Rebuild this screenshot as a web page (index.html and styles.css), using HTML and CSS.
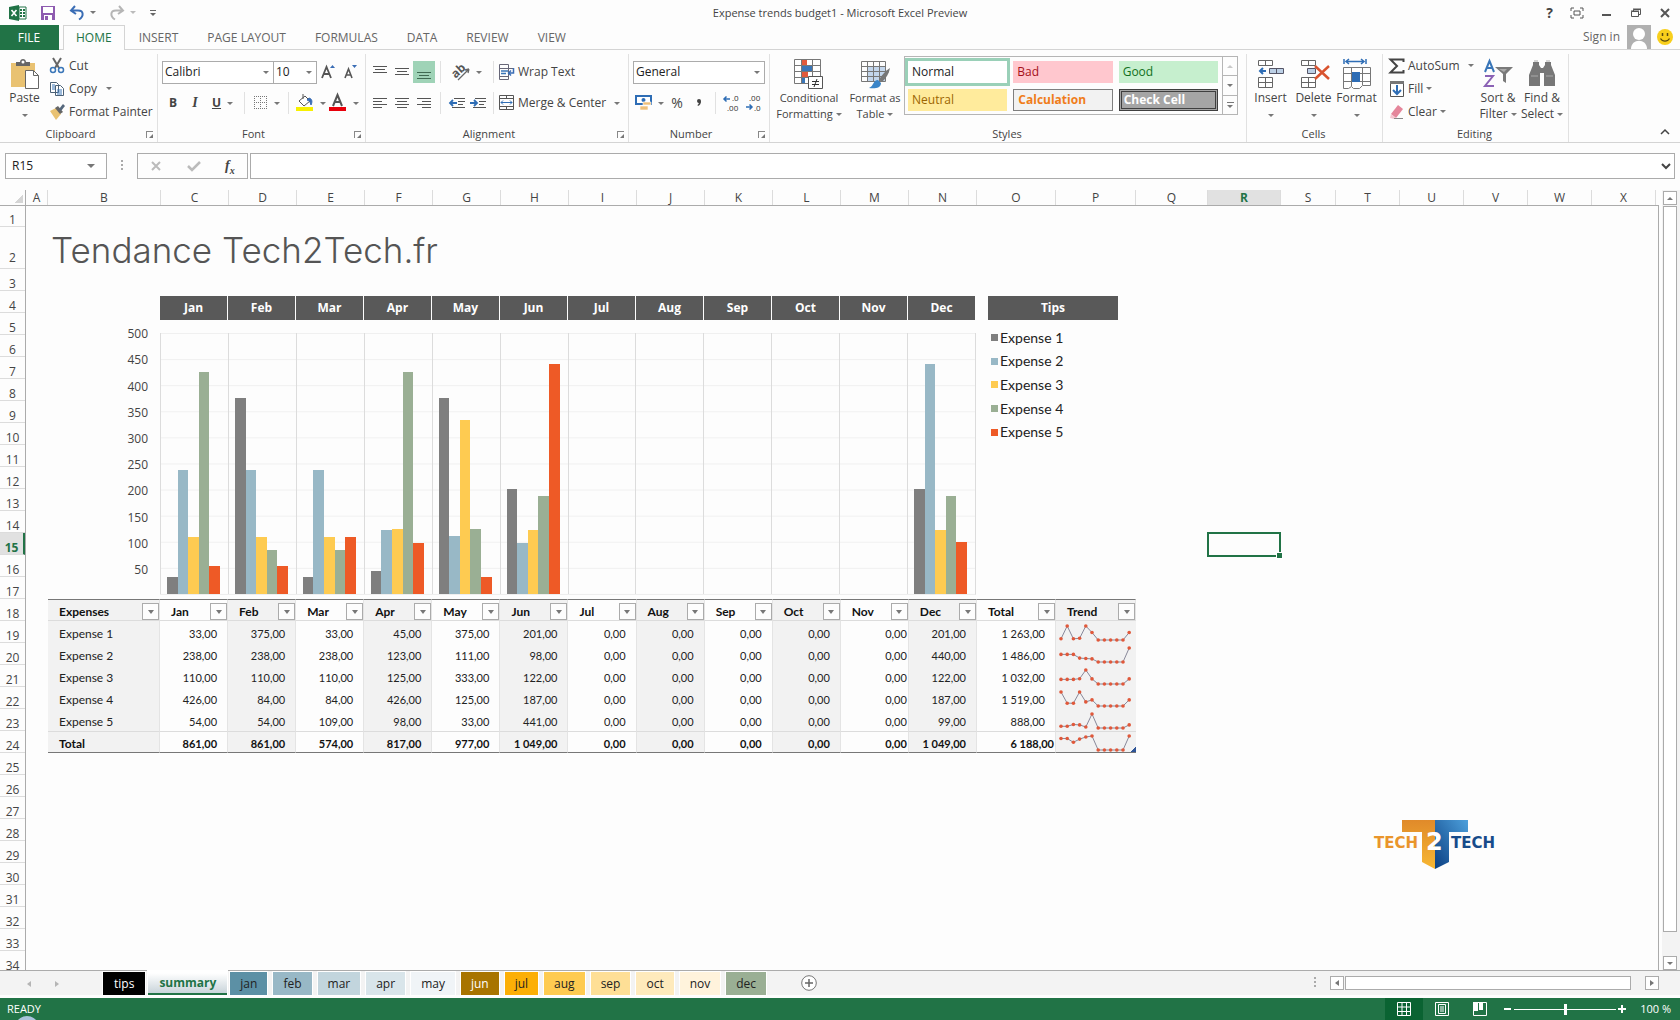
FILE: index.html
```html
<!DOCTYPE html>
<html lang="en">
<head>
    <meta charset="UTF-8">
    <title>Expense trends budget1 - Microsoft Excel Preview</title>
    <link rel="stylesheet" href="styles.css">
</head>
<body>
<header class="titlebar">
    <div class="quick">
        <svg class="logo-x" width="18" height="16" viewBox="0 0 18 16"><path d="M10 2h7v12h-7z" fill="#fff" stroke="#217346"/><path d="M11 5h2M11 8h2M11 11h2M14 5h2M14 8h2M14 11h2" stroke="#217346" stroke-width="2"/><path d="M0 2l10-2v16L0 14z" fill="#217346"/><path d="M2.500 5l5 6M7.500 5l-5 6" stroke="#fff" stroke-width="1.600"/></svg>
        <button aria-label="Save"><svg width="16" height="16" viewBox="0 0 16 16"><path d="M1 1h14v14H1z" fill="#8e5bb0"/><path d="M3 2h10v6H3zM4 10h8v5H4z" fill="#fff"/><path d="M5 11h3v4H5z" fill="#8e5bb0"/></svg></button>
        <button class="drop" aria-label="Undo"><svg width="16" height="16" viewBox="0 0 16 16"><path d="M6 1L2 5.500l5 3.500M2.500 5.500H9c6 0 6 6 1 9" fill="none" stroke="#3a6db5" stroke-width="2"/></svg></button>
        <button class="drop pale" aria-label="Redo"><svg width="16" height="16" viewBox="0 0 16 16"><path d="M10 1l4 4.500L9 9M13.500 5.500H7c-6 0-6 6-1 9" fill="none" stroke="#b5b5b5" stroke-width="2"/></svg></button>
        <button aria-label="Customize Quick Access Toolbar"><svg width="8" height="8" viewBox="0 0 8 8"><path d="M1 1.500h6" stroke="#666"/><path d="M1 4h6L4 7z" fill="#666"/></svg></button>
    </div>
    <h2>Expense trends budget1 - Microsoft Excel Preview</h2>
    <div class="window">
        <button class="help" aria-label="Help">?</button>
        <button aria-label="Ribbon display options"><svg width="14" height="12" viewBox="0 0 14 12"><path d="M1 4V1h3M10 1h3v3M13 8v3h-3M4 11H1V8M4 4h6v4H4z" fill="none" stroke="#555"/></svg></button>
        <button aria-label="Minimize"><svg width="12" height="12" viewBox="0 0 12 12"><path d="M1 8h9" stroke="#555" stroke-width="2"/></svg></button>
        <button aria-label="Restore"><svg width="12" height="12" viewBox="0 0 12 12"><path d="M1.500 4.500h7v5h-7zM3.500 4V2.500h7v5H9" fill="none" stroke="#555"/><path d="M1 4h8M3 2h8" stroke="#555"/></svg></button>
        <button aria-label="Close"><svg width="12" height="12" viewBox="0 0 12 12"><path d="M2 2l8 8M10 2l-8 8" stroke="#555" stroke-width="2"/></svg></button>
    </div>
</header>

<nav class="tabs">
    <a href="#" class="file">FILE</a>
    <a href="#" class="on">HOME</a>
    <a href="#">INSERT</a>
    <a href="#">PAGE LAYOUT</a>
    <a href="#">FORMULAS</a>
    <a href="#">DATA</a>
    <a href="#">REVIEW</a>
    <a href="#">VIEW</a>
    <div class="account">
        <a href="#">Sign in</a>
        <svg width="24" height="24" viewBox="0 0 24 24"><path d="M0 0h24v24H0z" fill="#b0b0b0"/><circle cx="12" cy="9" r="6" fill="#fff"/><path d="M4 24c0-11 16-11 16 0z" fill="#fff"/></svg>
        <svg width="16" height="16" viewBox="0 0 16 16"><circle cx="8" cy="8" r="8" fill="#f8cf1c"/><path d="M5.500 4v3M10.500 4v3" stroke="#5a4a10" stroke-width="1.500"/><path d="M3.500 9.500c2 3.500 7 3.500 9 0" fill="none" stroke="#5a4a10" stroke-width="1.200"/></svg>
    </div>
</nav>

<section class="ribbon">
    <div class="group clipboard">
        <div class="tools">
            <button class="big"><svg width="30" height="30" viewBox="0 0 30 30"><path d="M1 4h24v24H1z" fill="#e9c272"/><path d="M6 3h4c0-4 6-4 6 0h4v4H6z" fill="#666"/><circle cx="13" cy="3" r="1.500" fill="#fff"/><path d="M15.500 11.500h8l5 5v13h-13z" fill="#fff" stroke="#666"/><path d="M23.500 11.500v5h5" fill="none" stroke="#666"/></svg>Paste<i></i></button>
            <div class="stack">
                <button><svg width="16" height="16" viewBox="0 0 16 16"><path d="M4 0l6 10M12 0L6 10" stroke="#666" stroke-width="2"/><circle cx="4" cy="12" r="2.500" fill="none" stroke="#3a76b8" stroke-width="1.500"/><circle cx="12" cy="12" r="2.500" fill="none" stroke="#3a76b8" stroke-width="1.500"/></svg>Cut</button>
                <button><svg width="16" height="16" viewBox="0 0 16 16"><path d="M1.500 1.500h6l2 2v8h-8zM6.500 4.500h5l3 3v7h-8z" fill="#fff" stroke="#4b6176"/><path d="M3 4h3M3 6h3M3 8h3M8 9h5M8 11h5M8 13h5" stroke="#3a76b8"/></svg>Copy<i class="far"></i></button>
                <button><svg width="16" height="16" viewBox="0 0 16 16"><path d="M1 7l6-3 5 6-5 6z" fill="#e9c272"/><path d="M6 4l3-2 5 6-3 2z" fill="#666"/><path d="M10 5l4-5 2 2-4 5z" fill="#54677c"/></svg>Format Painter</button>
            </div>
        </div>
        <footer>Clipboard<b class="launch"></b></footer>
    </div>

    <div class="group font">
        <div class="tools lines">
            <div class="row">
                <label class="combo face"><select aria-label="Font"><option>Calibri</option></select></label>
                <label class="combo size"><select aria-label="Font size"><option>10</option></select></label>
                <button class="sq grow" aria-label="Increase font size"><svg width="16" height="16" viewBox="0 0 16 16"><path d="M2 14L6.500 3 11 14M4 10h5" fill="none" stroke="#555" stroke-width="1.800"/><path d="M10 4h5l-2.500-3z" fill="#3a6db5"/></svg></button>
                <button class="sq" aria-label="Decrease font size"><svg width="16" height="16" viewBox="0 0 16 16"><path d="M3 14l3.500-9L10 14M4 11h5" fill="none" stroke="#555" stroke-width="1.600"/><path d="M10 1h5l-2.500 3z" fill="#3a6db5"/></svg></button>
            </div>
            <div class="row">
                <button class="sq"><strong>B</strong></button>
                <button class="sq"><em>I</em></button>
                <button class="sq dropped"><u>U</u><i></i></button>
                <hr>
                <button class="sq dropped" aria-label="Borders"><svg width="14" height="14" viewBox="0 0 14 14"><path d="M0.500 0v13M6.500 0v13M12.500 0v13M0 .5h13M0 6.500h13M0 12.500h13" stroke="#777" stroke-dasharray="1 1"/></svg><i></i></button>
                <hr>
                <button class="sq dropped" aria-label="Fill colour"><svg width="18" height="18" viewBox="0 0 18 18"><path d="M3 7l6-5 5 5-6 5z" fill="#fff" stroke="#555"/><path d="M7 0v5" stroke="#555"/><path d="M13 4c4 1 3 5 2 7-1-3-1-4-4-5z" fill="#3a6db5" stroke="#3a6db5"/><path d="M0 13h17v4H0z" fill="#f7f000"/></svg><i></i></button>
                <button class="sq dropped" aria-label="Font colour"><svg width="18" height="18" viewBox="0 0 18 18"><path d="M4 12L8.500 1 13 12M6 8h5" fill="none" stroke="#555" stroke-width="2"/><path d="M0 13h17v4H0z" fill="#e8000b"/></svg><i></i></button>
            </div>
        </div>
        <footer>Font<b class="launch"></b></footer>
    </div>

    <div class="group align">
        <div class="tools lines">
            <div class="row">
                <button class="sq" aria-label="Top align"><svg width="14" height="14" viewBox="0 0 14 14"><path d="M0 1.500h14M2 4.500h10M0 7.500h14" stroke="#555"/></svg></button>
                <button class="sq" aria-label="Middle align"><svg width="14" height="14" viewBox="0 0 14 14"><path d="M0 3.500h14M2 6.500h10M0 9.500h14" stroke="#555"/></svg></button>
                <button class="sq active" aria-label="Bottom align"><svg width="14" height="14" viewBox="0 0 14 14"><path d="M0 7.500h14M2 10.500h10M0 13.500h14" stroke="#3f6b52"/></svg></button>
                <hr>
                <button class="sq turn" aria-label="Orientation"><svg width="18" height="18" viewBox="0 0 18 18"><path d="M6 17L17 6M17 6l-4 1M17 6l-1 4" fill="none" stroke="#666" stroke-width="1.300"/><text x="-1" y="12" transform="rotate(-42 6 8)" font-size="12" font-weight="700" fill="#555">ab</text></svg><i></i></button>
                <hr>
                <button class="text"><svg width="16" height="16" viewBox="0 0 16 16"><path d="M.5.5h9v15h-9zM0 4.500h14M0 12.500h10" fill="none" stroke="#667"/><path d="M2 7h7M2 9.500h5" stroke="#3a76b8" stroke-width="1.500"/><path d="M14.500 4v5H10M12 6.500L9.500 9l2.500 2.500" fill="none" stroke="#3a6db5" stroke-width="1.500"/></svg>Wrap Text</button>
            </div>
            <div class="row">
                <button class="sq" aria-label="Align left"><svg width="14" height="12" viewBox="0 0 14 12"><path d="M0 1.500h14M0 4.500h9M0 7.500h14M0 10.500h9" stroke="#555"/></svg></button>
                <button class="sq" aria-label="Center"><svg width="14" height="12" viewBox="0 0 14 12"><path d="M0 1.500h14M2 4.500h10M0 7.500h14M2 10.500h10" stroke="#555"/></svg></button>
                <button class="sq" aria-label="Align right"><svg width="14" height="12" viewBox="0 0 14 12"><path d="M0 1.500h14M5 4.500h9M0 7.500h14M5 10.500h9" stroke="#555"/></svg></button>
                <hr>
                <button class="sq" aria-label="Decrease indent"><svg width="16" height="12" viewBox="0 0 16 12"><path d="M5 1.500h11M9 4.500h7M9 7.500h5M3 10.500h13" stroke="#555"/><path d="M8 6H1M4 3L1 6l3 3" fill="none" stroke="#2e6db5" stroke-width="1.800"/></svg></button>
                <button class="sq" aria-label="Increase indent"><svg width="16" height="12" viewBox="0 0 16 12"><path d="M5 1.500h11M9 4.500h7M9 7.500h5M3 10.500h13" stroke="#555"/><path d="M0 6h7M4 3l3 3-3 3" fill="none" stroke="#2e6db5" stroke-width="1.800"/></svg></button>
                <hr>
                <button class="text"><svg width="16" height="16" viewBox="0 0 16 16"><path d="M.5.5h14v14H.5zM0 3.500h15M0 11.500h15M7.500 0v3M7.500 12v3" fill="none" stroke="#555"/><path d="M2 7.500h11M4 5.500l-2 2 2 2M11 5.500l2 2-2 2" fill="none" stroke="#2e6db5"/></svg>Merge &amp; Center<i class="far"></i></button>
            </div>
        </div>
        <footer>Alignment<b class="launch"></b></footer>
    </div>

    <div class="group number">
        <div class="tools lines">
            <div class="row">
                <label class="combo format"><select aria-label="Number format"><option>General</option></select></label>
            </div>
            <div class="row">
                <button class="sq dropped" aria-label="Accounting format"><svg width="17" height="16" viewBox="0 0 17 16"><path d="M1 1h15v8H1z" fill="#fff" stroke="#2e6db5" stroke-width="2"/><circle cx="8.500" cy="5" r="2" fill="#2e6db5"/><path d="M8 7h8v3H8zM5 11h8v4H5z" fill="#efc07a" stroke="#fff" stroke-width=".6"/></svg><i></i></button>
                <button class="sq percent">%</button>
                <button class="sq comma" aria-label="Comma style"><svg width="6" height="10" viewBox="0 0 6 10"><circle cx="3" cy="3" r="2" fill="#444"/><path d="M5 3q0 4-3 5l-.5-1q2-1 1-3z" fill="#444"/></svg></button>
                <hr>
                <button class="sq" aria-label="Increase decimal"><svg width="18" height="20" viewBox="0 0 18 20"><path d="M7 6H1M3.500 3.500L1 6l2.500 2.500" fill="none" stroke="#2e6db5" stroke-width="1.500"/><text x="9" y="8" font-size="8" fill="#333">.0</text><text x="4" y="18" font-size="8" fill="#333">.00</text></svg></button>
                <button class="sq" aria-label="Decrease decimal"><svg width="18" height="20" viewBox="0 0 18 20"><path d="M1 14h6M4.500 11.500L7 14l-2.500 2.500" fill="none" stroke="#2e6db5" stroke-width="1.500"/><text x="4" y="8" font-size="8" fill="#333">.00</text><text x="9" y="18" font-size="8" fill="#333">.0</text></svg></button>
            </div>
        </div>
        <footer>Number<b class="launch"></b></footer>
    </div>

    <div class="group styles">
        <div class="tools">
            <button class="big wide"><svg width="30" height="30" viewBox="0 0 30 30"><path d="M.5.5h26v24H.5z" fill="#fff"/><path d="M7 0h6v6H7zM7 12h7v6H7z" fill="#e25a3c"/><path d="M8 7h10v5H8z" fill="#3a76b8"/><path d="M7 19h4v5H7z" fill="#3a76b8"/><path d="M.5.5h26v24H.5zM7.500 0v24M18.500 0v24M0 6.500h27M0 12.500h27M0 18.500h27" fill="none" stroke="#777"/><path d="M14.500 17.500h14v12h-14z" fill="#fff" stroke="#555"/><path d="M18 22.500h7M18 25.500h7M23 20l-3 8" stroke="#333"/></svg>Conditional<span>Formatting<i></i></span></button>
            <button class="big"><svg width="30" height="30" viewBox="0 0 30 30"><path d="M8 7h18v15H8z" fill="#c3d6ec"/><path d="M1.500 2.500h24v20h-24zM1 7.500h25M1 12.500h25M1 17.500h25M7.500 2v20M13.500 2v20M19.500 2v20" fill="none" stroke="#777"/><path d="M30 9c-5 3-9 8-11 12l3 2c4-4 7-8 8-14z" fill="#777"/><path d="M18 21c-5 0-4 6-9 8 6 1 12 0 12-5z" fill="#3a85c8"/></svg>Format as<span>Table<i></i></span></button>
            <div class="gallery">
                <ul>
                    <li><button class="normal">Normal</button></li>
                    <li><button class="bad">Bad</button></li>
                    <li><button class="good">Good</button></li>
                    <li><button class="neutral">Neutral</button></li>
                    <li><button class="calc">Calculation</button></li>
                    <li><button class="check">Check Cell</button></li>
                </ul>
                <div class="spin">
                    <button aria-label="Previous styles"><i class="up"></i></button>
                    <button aria-label="Next styles"><i></i></button>
                    <button class="more" aria-label="More styles"><i></i></button>
                </div>
            </div>
        </div>
        <footer class="plain">Styles</footer>
    </div>

    <div class="group cells">
        <div class="tools">
            <button class="big"><svg width="30" height="30" viewBox="0 0 30 30"><path d="M2.500 1.500h14v5h-14zM9.500 1v5M2.500 18.500h14v10h-14zM9.500 18v10M2 23.500h14" fill="#fff" stroke="#666"/><path d="M13.500 9.500h14v5h-14zM20.500 9v5" fill="#bcd0e6" stroke="#556"/><path d="M10 12H4M7 9l-3 3 3 3" fill="none" stroke="#2e6db5" stroke-width="2"/></svg>Insert<i></i></button>
            <button class="big"><svg width="30" height="30" viewBox="0 0 30 30"><path d="M2.500 1.500h14v5h-14zM9.500 1v5M2.500 18.500h14v10h-14zM9.500 18v10M2 23.500h14" fill="#fff" stroke="#666"/><path d="M8.500 9.500h8v5h-8z" fill="#bcd0e6" stroke="#556"/><path d="M16 7l14 13M30 7L16 20" stroke="#d9532f" stroke-width="2.500"/></svg>Delete<i></i></button>
            <button class="big"><svg width="30" height="32" viewBox="0 0 30 32"><path d="M2 1v5M24 1v5M4 3.500h18M7 1L4 3.500 7 6M19 1l3 2.500L19 6" fill="none" stroke="#2e6db5" stroke-width="1.500"/><path d="M1.500 9.500h27v18h-8l-3 3h-6l-2-2-3 2h-5zM9.500 9v19M20.500 9v18M1 15.500h27M1 23.500h27" fill="#fff" stroke="#777"/><path d="M10 14h8v10h-8z" fill="#2e6db5"/></svg>Format<i></i></button>
        </div>
        <footer class="plain">Cells</footer>
    </div>

    <div class="group editing">
        <div class="tools">
            <div class="stack">
                <button><svg width="16" height="16" viewBox="0 0 16 16"><path d="M14.500 4V1.500h-13L8 8l-6.500 6.500h13V12" fill="none" stroke="#444" stroke-width="2"/></svg>AutoSum<i class="far"></i></button>
                <button><svg width="16" height="16" viewBox="0 0 16 16"><path d="M1.500.5h13v15h-13z" fill="#fff" stroke="#555"/><path d="M1 0h14v3H1z" fill="#777"/><path d="M8 4v9M4 9l4 4 4-4" fill="none" stroke="#2e6db5" stroke-width="2"/></svg>Fill<i></i></button>
                <button><svg width="16" height="16" viewBox="0 0 16 16"><path d="M2 10l7-9 5 4-7 9z" fill="#e5869b"/><path d="M2 10l5 4-2 1-4-1z" fill="#f6c6d0"/><path d="M5 14.500h9" stroke="#888"/></svg>Clear<i></i></button>
            </div>
            <button class="big"><svg width="30" height="30" viewBox="0 0 30 30"><path d="M2 13L6.500 2 11 13M4 9h6" fill="none" stroke="#3a76b8" stroke-width="2"/><path d="M2 17h8L2 27h9" fill="none" stroke="#8b62b5" stroke-width="2"/><path d="M12 8h18l-7 7v9l-3-2v-7z" fill="#7a7a7a"/><path d="M16 10h8l-3 3z" fill="#aaa"/></svg>Sort &amp;<span>Filter<i></i></span></button>
            <button class="big"><svg width="30" height="30" viewBox="0 0 30 30"><path d="M6 6V3h6v3l2 3h2l2-3V3h6v3l4 10v11H17V14h-4v13H2V16z" fill="#777"/><path d="M4 17h7M19 17h7M7 2h4M19 2h4" stroke="#aaa"/></svg>Find &amp;<span>Select<i></i></span></button>
        </div>
        <footer class="plain">Editing</footer>
    </div>
    <button class="collapse" aria-label="Collapse ribbon"><svg width="10" height="8" viewBox="0 0 10 8"><path d="M1 6l4-4 4 4" fill="none" stroke="#444" stroke-width="1.500"/></svg></button>
</section>

<section class="formula">
    <label class="combo name"><select aria-label="Name box"><option>R15</option></select></label>
    <b class="dots"></b>
    <div class="fx">
        <button aria-label="Cancel"><svg width="12" height="12" viewBox="0 0 12 12"><path d="M2 2l8 8M10 2l-8 8" stroke="#bbb" stroke-width="2"/></svg></button>
        <button aria-label="Enter"><svg width="14" height="12" viewBox="0 0 14 12"><path d="M1 6l4 4 8-8" fill="none" stroke="#bbb" stroke-width="2.500"/></svg></button>
        <button class="insert"><em>f<sub>x</sub></em></button>
    </div>
    <div class="entry">
        <input type="text" aria-label="Formula">
        <button aria-label="Expand formula bar"><svg width="10" height="8" viewBox="0 0 10 8"><path d="M1 2l4 4 4-4" fill="none" stroke="#444" stroke-width="2"/></svg></button>
    </div>
</section>

<main class="sheet">
    <div class="corner"></div>
    <div class="cols" id="cols"></div>
    <ol class="rows" id="rows"></ol>
    <div class="canvas">
        <h1>Tendance Tech2Tech.fr</h1>
        <div class="months" id="months"></div>
        <div class="chart">
            <div class="axis" id="axis"></div>
            <div class="plot" id="plot"></div>
            <ul class="legend" id="legend"></ul>
        </div>
        <table id="data"></table>
        <div class="cursor"></div>
        <svg class="brand" width="126" height="54" viewBox="0 0 126 54">
            <defs>
                <linearGradient id="gold" x1="0" y1="0" x2="0" y2="1"><stop offset="0" stop-color="#e08a2a"/><stop offset="1" stop-color="#f7b733"/></linearGradient>
                <linearGradient id="sky" x1="1" y1="0" x2="0" y2="1"><stop offset="0" stop-color="#4da0dc"/><stop offset="1" stop-color="#0b3f82"/></linearGradient>
            </defs>
            <path d="M28 2h33v49l-13-7V14H28z" fill="url(#gold)"/>
            <path d="M61 2h33v12H75v30l-14 7z" fill="url(#sky)"/>
            <text x="0" y="30" class="gold">TECH</text>
            <text x="77" y="30" class="navy">TECH</text>
            <text x="52" y="32" class="two">2</text>
        </svg>
    </div>
    <div class="scroll">
        <button aria-label="Scroll up"><i class="up"></i></button>
        <div class="thumb"></div>
        <button aria-label="Scroll down"><i></i></button>
    </div>
</main>

<nav class="sheets">
    <div class="arrows"><button aria-label="Previous sheet"><i class="left"></i></button><button aria-label="Next sheet"><i class="right"></i></button></div>
    <a href="#" class="tips">tips</a>
    <a href="#" class="summary">summary</a>
    <a href="#" class="jan">jan</a>
    <a href="#" class="feb">feb</a>
    <a href="#" class="mar">mar</a>
    <a href="#" class="apr">apr</a>
    <a href="#" class="may">may</a>
    <a href="#" class="jun">jun</a>
    <a href="#" class="jul">jul</a>
    <a href="#" class="aug">aug</a>
    <a href="#" class="sep">sep</a>
    <a href="#" class="oct">oct</a>
    <a href="#" class="nov">nov</a>
    <a href="#" class="dec">dec</a>
    <button class="add" aria-label="New sheet"><svg width="16" height="16" viewBox="0 0 16 16"><circle cx="8" cy="8" r="7.300" fill="#fff" stroke="#777"/><path d="M8 4v8M4 8h8" stroke="#666" stroke-width="1.500"/></svg></button>
    <div class="hscroll">
        <b class="dots"></b>
        <button aria-label="Scroll left"><i class="left"></i></button>
        <div class="thumb"></div>
        <button aria-label="Scroll right"><i class="right"></i></button>
    </div>
</nav>

<footer class="status">
    <span>READY</span>
    <div class="views">
        <button class="on" aria-label="Normal view"><svg width="14" height="14" viewBox="0 0 14 14"><path d="M.5.500h13v13H.5zM5 0v14M9.500 0v14M0 5h14M0 9.500h14" fill="none" stroke="#fff"/></svg></button>
        <button aria-label="Page layout"><svg width="14" height="14" viewBox="0 0 14 14"><path d="M.5.500h13v13H.5zM3.500 2.500h7v9h-7zM5 5h4M5 7h4M5 9h4" fill="none" stroke="#fff"/></svg></button>
        <button aria-label="Page break preview"><svg width="14" height="14" viewBox="0 0 14 14"><path d="M.5.500h13v13H.5z" fill="none" stroke="#fff"/><path d="M0 0h5v9H0zM6 0h4v8H6z" fill="#fff"/></svg></button>
    </div>
    <button class="zoom" aria-label="Zoom out"><svg width="8" height="8" viewBox="0 0 8 8"><path d="M0 4h7" stroke="#fff" stroke-width="2"/></svg></button>
    <input type="range" min="0" max="200" value="100" aria-label="Zoom">
    <button class="zoom" aria-label="Zoom in"><svg width="8" height="8" viewBox="0 0 8 8"><path d="M0 4h8M4 0v8" stroke="#fff" stroke-width="2"/></svg></button>
    <span class="pct">100 %</span>
    <div class="orb"></div>
</footer>
<script src="script.js"></script>
</body>
</html>
```
FILE: styles.css
```css
*{
    margin: 0;
    padding: 0;
    box-sizing: border-box;
    list-style: none;
}
body{
    height: 100vh;
    display: flex;
    flex-direction: column;
    overflow: hidden;
    background: #fdfdfd;
    color: #444;
    font: 12px/16px "Open Sans", "Noto Sans", sans-serif;
}
a{
    color: inherit;
    text-decoration: none;
}
button, select, input{
    border: 0;
    background: none;
    color: inherit;
    font: inherit;
    outline: none;
}
svg{
    display: block;
    flex: none;
    overflow: visible;
}
/* small triangles */
i{
    display: inline-block;
    flex: none;
    border: 3px solid transparent;
    border-top-color: #777;
    border-bottom: 0;
}
i.up{
    border-top: 0;
    border-bottom: 3px solid #777;
}
i.left{
    border: 3px solid transparent;
    border-left: 0;
    border-right: 4px solid #777;
}
i.right{
    border: 3px solid transparent;
    border-right: 0;
    border-left: 4px solid #777;
}
.dots{
    width: 2px;
    height: 12px;
    background: repeating-linear-gradient(#aaa 0 2px, transparent 2px 4px);
}

/* title bar */
.titlebar{
    display: grid;
    grid-template-columns: 1fr auto 1fr;
    align-items: center;
    height: 25px;
}
.titlebar h2{
    font-size: 11px;
    font-weight: 400;
}
.quick{
    display: flex;
    align-items: center;
    gap: 13px;
    padding-left: 9px;
}
.quick .drop{
    display: flex;
    align-items: center;
    gap: 5px;
}
.quick .drop::after{
    content: "";
    border: 3px solid transparent;
    border-top-color: #777;
    border-bottom: 0;
}
.quick .pale::after{
    border-top-color: #bbb;
}
.window{
    display: flex;
    justify-content: flex-end;
    align-items: center;
    gap: 17px;
    padding-right: 9px;
}
.window .help{
    font-size: 14px;
    font-weight: 700;
}

/* ribbon tabs */
.tabs{
    display: flex;
    height: 25px;
    border-bottom: 1px solid #d4d4d4;
    line-height: 26px;
    color: #666;
}
.tabs a{
    padding: 0 15px 0 14px;
}
.tabs .file{
    width: 59px;
    height: 25px;
    margin-right: 4px;
    background: #217346;
    color: #fff;
    text-align: center;
}
.tabs .on{
    height: 25px;
    padding: 0 12px;
    border: 1px solid #d4d4d4;
    border-bottom: 0;
    background: #fdfdfd;
    color: #217346;
    line-height: 24px;
}
.account{
    display: flex;
    align-items: center;
    gap: 6px;
    margin-left: auto;
    padding-right: 7px;
}
.tabs .account a{
    padding: 0 1px;
}

/* ribbon */
.ribbon{
    display: flex;
    height: 93px;
    border-bottom: 1px solid #d4d4d4;
}
.group{
    display: flex;
    flex: none;
    flex-direction: column;
    margin: 4px 0 0;
    border-right: 1px solid #e1e1e1;
}
.tools{
    display: flex;
    flex: 1;
}
.group footer{
    display: flex;
    justify-content: center;
    height: 16px;
    padding-right: 16px;
    font-size: 11px;
    position: relative;
}
.group .plain{
    padding-right: 2px;
}
.launch{
    position: absolute;
    right: 4px;
    top: 5px;
    width: 7px;
    height: 7px;
    border: solid #888;
    border-width: 1px 0 0 1px;
}
.launch::after{
    content: "";
    position: absolute;
    right: 0;
    bottom: 0;
    border: 2px solid #777;
    border-top-color: transparent;
    border-left-color: transparent;
}
.big{
    display: flex;
    flex-direction: column;
    align-items: center;
    padding-top: 4px;
    line-height: 16px;
    white-space: nowrap;
}
.big svg{
    height: 32px;
}
.big > i{
    margin-top: 8px;
}
.big span i{
    margin: 0 0 2px 3px;
}
.stack{
    display: flex;
    flex-direction: column;
}
.stack button, .text{
    display: flex;
    align-items: center;
    gap: 4px;
    height: 23px;
    white-space: nowrap;
}
.text{
    gap: 3px;
}
.far{
    margin-left: 5px;
}
.lines{
    flex-direction: column;
    gap: 9px;
    padding-top: 7px;
}
.row{
    display: flex;
    align-items: center;
    height: 22px;
}
.row hr{
    width: 1px;
    height: 22px;
    margin: 0 5px;
    border: 0;
    background: #e1e1e1;
}
.sq{
    display: flex;
    align-items: center;
    justify-content: center;
    gap: 6px;
    width: 22px;
    height: 22px;
}
.dropped, .turn{
    width: 33px;
}
.combo{
    display: flex;
    align-items: center;
    height: 23px;
    border: 1px solid #ababab;
    background: #fff;
}
.combo select{
    flex: 1;
    min-width: 0;
    padding-left: 2px;
    appearance: none;
    color: #222;
}
.combo::after{
    content: "";
    margin-right: 4px;
    border: 3px solid transparent;
    border-top-color: #777;
    border-bottom: 0;
}
.clipboard{
    width: 158px;
}
.clipboard .big{
    width: 49px;
}
.font{
    width: 208px;
}
.font .row{
    padding-left: 4px;
}
.face{
    width: 112px;
}
.size{
    width: 44px;
    margin-left: -1px;
}
.font strong, .font em, .font u{
    font-size: 12px;
    font-weight: 700;
}
.font em{
    font-family: "Liberation Serif", serif;
    font-size: 14px;
}
.align{
    width: 263px;
}
.align .row{
    padding-left: 3px;
}
.align .turn{
    width: 42px;
}
.align .active{
    background: #9fd3b7;
}
.align .row:last-child .sq:nth-of-type(4), .align .row:last-child .sq:nth-of-type(5){
    width: 21px;
}
.number{
    width: 141px;
}
.number .row{
    padding-left: 4px;
}
.number .format{
    width: 132px;
}
.percent{
    font-size: 14px;
}
.styles{
    width: 477px;
}
.styles .big{
    width: 64px;
    font-size: 11px;
}
.styles .wide{
    width: 68px;
    margin-left: 5px;
}
.gallery{
    display: flex;
    flex: 1;
    align-self: flex-start;
    height: 59px;
    margin: 2px 8px 0 -3px;
    border: 1px solid #b5b5b5;
}
.gallery ul{
    display: grid;
    grid-template-columns: repeat(3, 1fr);
    align-content: start;
    flex: 1;
    gap: 6px;
    padding: 4px 4px 4px 3px;
}
.gallery li button{
    display: block;
    width: 100%;
    height: 22px;
    padding-left: 4px;
    text-align: left;
}
.gallery .normal{
    outline: 3px solid #9ad0b8;
    background: #fff;
    color: #222;
}
.gallery .bad{
    background: #ffc7ce;
    color: #a5101a;
}
.gallery .good{
    background: #c6efce;
    color: #117021;
}
.gallery .neutral{
    background: #ffeb9c;
    color: #9c6500;
}
.gallery .calc{
    border: 1px solid #7f7f7f;
    background: #f2f2f2;
    color: #f07d1a;
    font-weight: 700;
}
.gallery .check{
    padding-left: 2px;
    border: 3px double #3f3f3f;
    background: #a5a5a5;
    color: #fff;
    font-weight: 700;
}
.spin{
    display: flex;
    flex-direction: column;
    width: 15px;
    border-left: 1px solid #b5b5b5;
}
.spin button{
    display: flex;
    flex: 1;
    align-items: center;
    justify-content: center;
}
.spin button + button{
    border-top: 1px solid #b5b5b5;
}
.spin .up{
    opacity: .4;
}
.spin .more{
    flex-direction: column;
    gap: 2px;
}
.spin .more::before{
    content: "";
    width: 7px;
    height: 1px;
    background: #777;
}
.cells{
    width: 136px;
}
.cells .tools{
    padding-left: 2px;
}
.cells .big{
    width: 43px;
}
.editing{
    width: 186px;
}
.editing .stack{
    width: 93px;
    padding-left: 6px;
}
.editing .stack button{
    gap: 3px;
}
.editing .big{
    width: 44px;
}
.collapse{
    align-self: flex-end;
    margin: 0 10px 6px auto;
}

/* formula bar */
.formula{
    display: flex;
    align-items: center;
    height: 47px;
    padding: 0 5px 2px;
}
.name{
    width: 102px;
    height: 26px;
}
.name select{
    padding-left: 6px;
}
.name::after{
    margin-right: 11px;
    border-width: 4px 4px 0;
}
.formula .dots{
    margin: 0 14px;
}
.fx{
    display: flex;
    align-items: center;
    justify-content: space-around;
    width: 111px;
    height: 26px;
    border: 1px solid #ababab;
}
.insert em{
    font: italic 700 14px/16px "Liberation Serif", serif;
}
.insert sub{
    font-size: 10px;
    line-height: 1px;
}
.entry{
    display: flex;
    flex: 1;
    height: 26px;
    margin-left: 2px;
    padding-right: 3px;
    border: 1px solid #ababab;
    background: #fff;
}
.entry input{
    flex: 1;
}

/* sheet */
.sheet{
    display: grid;
    grid-template: 16px 1fr / 26px 1fr 21px;
    flex: 1;
    min-height: 0;
    overflow: hidden;
    border-bottom: 1px solid #ababab;
}
.corner{
    border-right: 1px solid #ababab;
    border-bottom: 1px solid #ababab;
    background: linear-gradient(135deg, transparent 50%, #d5d5d5 50%) 14px 4px / 9px 9px no-repeat;
}
.cols{
    display: grid;
    grid-template-columns: 22px 113px repeat(12, 68px) 79px 80px 72px 73px 55px repeat(5, 64px);
    overflow: hidden;
    border-bottom: 1px solid #ababab;
    line-height: 16px;
    text-align: center;
}
.cols span{
    border-right: 1px solid #dcdcdc;
}
.cols .on{
    border-bottom: 2px solid #217346;
    background: #e1e1e1;
    color: #217346;
    font-weight: 700;
}
.rows{
    overflow: hidden;
    border-right: 1px solid #ababab;
    text-align: center;
}
.rows li{
    display: flex;
    align-items: flex-end;
    justify-content: center;
    height: 22px;
    border-bottom: 1px solid #dcdcdc;
    line-height: 12px;
}
.rows li:first-child{
    height: 21px;
}
.rows li:nth-child(2){
    height: 42px;
    line-height: 20px;
}
.rows .on{
    border-right: 2px solid #217346;
    background: #e1e1e1;
    color: #217346;
    font-weight: 700;
}
.canvas{
    position: relative;
    overflow: hidden;
    min-height: 0;
    border-right: 1px solid #ababab;
}
h1{
    height: 42px;
    margin: 21px 0 27px 25px;
    color: #555;
    font: 300 35px/46px "Inter", sans-serif;
}
.months{
    display: flex;
    padding-left: 134px;
    color: #fff;
    font-weight: 700;
    line-height: 24px;
    text-align: center;
}
.months span{
    width: 67px;
    margin-right: 1px;
    background: #595959;
}
.months .tip{
    width: 130px;
    margin-left: 12px;
}
.chart{
    display: flex;
    height: 262px;
    margin-top: 13px;
}
.axis{
    display: flex;
    flex-direction: column;
    width: 134px;
    height: 262px;
    margin-top: -12px;
    padding-right: 12px;
    text-align: right;
}
.axis span{
    display: flex;
    flex: 1;
    align-items: center;
    justify-content: flex-end;
}
.plot{
    display: flex;
    width: 816px;
    border-right: 1px solid #dcdcdc;
    border-bottom: 1px solid #eee;
    background: linear-gradient(#f0f0f0 1px, transparent 1px) 0 0 / 100% 10%;
}
.plot > div{
    display: flex;
    flex: 1;
    align-items: flex-end;
    padding: 0 8px 0 6px;
    border-left: 1px solid #dcdcdc;
}
.plot b{
    flex: 1;
}
.s1{
    background: #7f7f7f;
}
.s2{
    background: #98b8c6;
}
.s3{
    background: #fecb51;
}
.s4{
    background: #9aaf94;
}
.s5{
    background: #ee5a26;
}
.legend{
    display: flex;
    flex-direction: column;
    height: 118px;
    margin: -7px 0 0 15px;
    color: #222;
    font: 14px/16px "Lato", sans-serif;
}
.legend li{
    display: flex;
    flex: 1;
    align-items: center;
    gap: 2px;
}
.legend b{
    width: 7px;
    height: 7px;
}

/* expenses table */
table{
    width: 1088px;
    margin: 4px 0 0 22px;
    table-layout: fixed;
    border-spacing: 0;
    color: #222;
    font: 11px/16px "Lato", sans-serif;
}
th, td{
    height: 22px;
    padding-top: 3px;
    border-right: 1px solid #e4e4e4;
}
col.first{
    width: 112px;
}
col.sum{
    width: 79px;
}
col.trend{
    width: 80px;
}
th:nth-child(even), td:nth-child(even){
    background: #fdfdfd;
}
th:nth-child(odd), td:nth-child(odd){
    background: #f2f2f2;
}
thead th{
    border-top: 1px solid #777;
    border-bottom: 1px solid #dcdcdc;
    color: #111;
    font-size: 12px;
    font-weight: 700;
}
th > div{
    display: flex;
    align-items: center;
    justify-content: space-between;
    padding-left: 11px;
}
th button{
    display: flex;
    align-items: center;
    justify-content: center;
    width: 17px;
    height: 17px;
    border: 1px solid #ababab;
    background: #fdfdfd;
}
th i{
    border-width: 4px 3px 0;
}
td{
    padding-right: 10px;
    text-align: right;
}
td:first-child{
    padding-left: 11px;
    font-size: 12px;
    text-align: left;
}
td:nth-child(12){
    padding-right: 1px;
}
td:last-child{
    padding: 0;
    border-right: 0;
}
tr.total td{
    border-top: 1px solid #dcdcdc;
    border-bottom: 1px solid #777;
    color: #111;
    font-weight: 700;
}
tr.total td:nth-child(14){
    padding-right: 1px;
}
/* resize handle of the table */
tr.total td:last-child{
    background: linear-gradient(135deg, transparent 50%, #2f5597 50%) 100% 100% / 5px 5px no-repeat #f2f2f2;
}
td svg{
    height: 20px;
}
td polyline{
    fill: none;
    stroke: #889;
}
td circle{
    fill: #e0583a;
}

/* selected cell, drawn over the grid */
.cursor{
    position: absolute;
    left: 1181px;
    top: 326px;
    width: 74px;
    height: 25px;
    border: 2px solid #217346;
}
.cursor::after{
    content: "";
    position: absolute;
    right: -3px;
    bottom: -3px;
    width: 5px;
    height: 5px;
    background: #217346;
    outline: 1px solid #fff;
}
.brand{
    position: absolute;
    left: 1348px;
    top: 612px;
    font: 700 15px "DejaVu Sans", sans-serif;
}
.brand .gold{
    fill: #e9952c;
}
.brand .navy{
    fill: #174b8a;
}
.brand .two{
    fill: #fff;
    font-size: 24px;
}

/* scroll bars */
.scroll{
    display: flex;
    grid-column: 3;
    grid-row: 1 / 3;
    flex-direction: column;
    align-items: center;
    padding: 1px 0 0;
    background: linear-gradient(90deg, #fdfdfd 3px, #f3f3f3 3px);
}
.scroll button, .hscroll button{
    display: flex;
    align-items: center;
    justify-content: center;
    width: 14px;
    height: 14px;
    border: 1px solid #ababab;
    background: #fff;
}
.scroll .thumb{
    flex: 1;
    width: 14px;
    margin: 1px 0 24px;
    border: 1px solid #ababab;
    background: #fff;
}

/* sheet tabs */
.sheets{
    display: flex;
    height: 27px;
    padding: 0 21px 0 0;
    border-bottom: 3px solid #fdfdfd;
    background: #f3f3f3;
    color: #222;
    line-height: 24px;
    text-align: center;
}
.sheets a{
    height: 23px;
    margin: 1px 3px 0;
    padding: 0 10px;
    outline: 1px solid #fff;
}
.arrows{
    display: flex;
    gap: 24px;
    width: 100px;
    padding-left: 27px;
}
.arrows i{
    opacity: .5;
}
.sheets .tips{
    padding: 0 11px;
    background: #000;
    color: #fff;
}
.sheets .summary{
    height: 24px;
    margin: 0;
    padding: 0 11px;
    border-bottom: 2px solid #217346;
    background: linear-gradient(#fff 10%, #c9d4da);
    color: #217346;
    font-weight: 700;
}
.sheets .jan{
    background: #5c90a5;
}
.sheets .feb{
    background: #98b8c6;
}
.sheets .mar{
    background: #c2d5dd;
}
.sheets .apr{
    background: #d9e5ea;
}
.sheets .may{
    background: #f0f4f7;
}
.sheets .jun{
    background: #a87400;
    color: #fff;
}
.sheets .jul{
    background: #fcaf06;
}
.sheets .aug{
    background: #fecb51;
}
.sheets .sep{
    background: #fedf96;
}
.sheets .oct{
    background: #feeabc;
}
.sheets .nov{
    background: #fff3dc;
}
.sheets .dec{
    background: #9aaf94;
}
.add{
    margin-left: 32px;
}
.hscroll{
    display: flex;
    align-items: center;
    margin-left: auto;
}
.hscroll .dots{
    margin-right: 14px;
}
.hscroll .thumb{
    width: 286px;
    height: 14px;
    margin: 0 14px 0 1px;
    border: 1px solid #ababab;
    background: #fff;
}

/* status bar */
.status{
    display: flex;
    align-items: center;
    position: relative;
    height: 22px;
    padding: 0 9px 0 7px;
    overflow: hidden;
    background: #217346;
    color: #fff;
    font-size: 11px;
}
.views{
    display: flex;
    margin-left: auto;
    padding-right: 5px;
}
.views button{
    display: flex;
    align-items: center;
    justify-content: center;
    width: 38px;
    height: 22px;
}
.views .on{
    background: #0a6332;
}
.status input{
    width: 102px;
    height: 12px;
    margin: 0 2px;
    appearance: none;
    background: linear-gradient(#fff, #fff) center / 100% 1px no-repeat;
}
.status input::-webkit-slider-thumb{
    width: 3px;
    height: 11px;
    appearance: none;
    background: #fff;
}
.pct{
    margin-left: 14px;
}
.orb{
    position: absolute;
    left: 15px;
    top: 18px;
    width: 24px;
    height: 24px;
    border-radius: 50%;
    background: #a9c3dc;
}
```
FILE: script.js
```js
var names = ['Jan', 'Feb', 'Mar', 'Apr', 'May', 'Jun', 'Jul', 'Aug', 'Sep', 'Oct', 'Nov', 'Dec'];
var data = [
    [33, 375, 33, 45, 375, 201, 0, 0, 0, 0, 0, 201],
    [238, 238, 238, 123, 111, 98, 0, 0, 0, 0, 0, 440],
    [110, 110, 110, 125, 333, 122, 0, 0, 0, 0, 0, 122],
    [426, 84, 84, 426, 125, 187, 0, 0, 0, 0, 0, 187],
    [54, 54, 109, 98, 33, 441, 0, 0, 0, 0, 0, 99]
];
var max = 500;

function $(id){
    return document.getElementById(id);
}
function money(n){
    return String(n).replace(/(\d)(\d{3})$/, '$1 $2') + ',00';
}
function sum(list){
    return list.reduce(function(a, b){ return a + b; }, 0);
}
function spark(list){
    var top = Math.max.apply(null, list);
    var pts = list.map(function(v, i){
        return [(5 + i * 6.2).toFixed(1), (18 - 14 * v / top).toFixed(1)];
    });
    return '<svg width="78" height="20" viewBox="0 0 78 20"><polyline points="' + pts.join(' ') + '"/>' +
        pts.map(function(p){ return '<circle cx="' + p[0] + '" cy="' + p[1] + '" r="1.8"/>'; }).join('') + '</svg>';
}

// column letters and row numbers
var html = '';
'ABCDEFGHIJKLMNOPQRSTUVWX'.split('').forEach(function(c){
    html += '<span' + (c === 'R' ? ' class="on"' : '') + '>' + c + '</span>';
});
$('cols').innerHTML = html;
html = '';
for(var r = 1; r <= 34; r++){
    html += '<li' + (r === 15 ? ' class="on"' : '') + '>' + r + '</li>';
}
$('rows').innerHTML = html;

// chart
$('months').innerHTML = names.map(function(m){ return '<span>' + m + '</span>'; }).join('') + '<span class="tip">Tips</span>';
html = '';
for(var v = max; v > 0; v -= 50){
    html += '<span>' + v + '</span>';
}
$('axis').innerHTML = html;
$('plot').innerHTML = names.map(function(m, i){
    return '<div>' + data.map(function(row, s){
        return '<b class="s' + (s + 1) + '" style="height:' + row[i] / max * 100 + '%"></b>';
    }).join('') + '</div>';
}).join('');
$('legend').innerHTML = data.map(function(row, s){
    return '<li><b class="s' + (s + 1) + '"></b>Expense ' + (s + 1) + '</li>';
}).join('');

// table
function line(label, list, cls){
    return '<tr class="' + cls + '"><td>' + label + '</td>' +
        list.concat(sum(list)).map(function(n){ return '<td>' + money(n) + '</td>'; }).join('') +
        '<td>' + spark(list) + '</td></tr>';
}
var totals = names.map(function(m, i){
    return sum(data.map(function(row){ return row[i]; }));
});
$('data').innerHTML = '<colgroup><col class="first"><col span="12"><col class="sum"><col class="trend"></colgroup><thead><tr>' +
    ['Expenses'].concat(names, 'Total', 'Trend').map(function(h){
        return '<th><div>' + h + '<button aria-label="Filter ' + h + '"><i></i></button></div></th>';
    }).join('') + '</tr></thead><tbody>' +
    data.map(function(row, i){ return line('Expense ' + (i + 1), row, 'item'); }).join('') +
    line('Total', totals, 'total') + '</tbody>';
```
